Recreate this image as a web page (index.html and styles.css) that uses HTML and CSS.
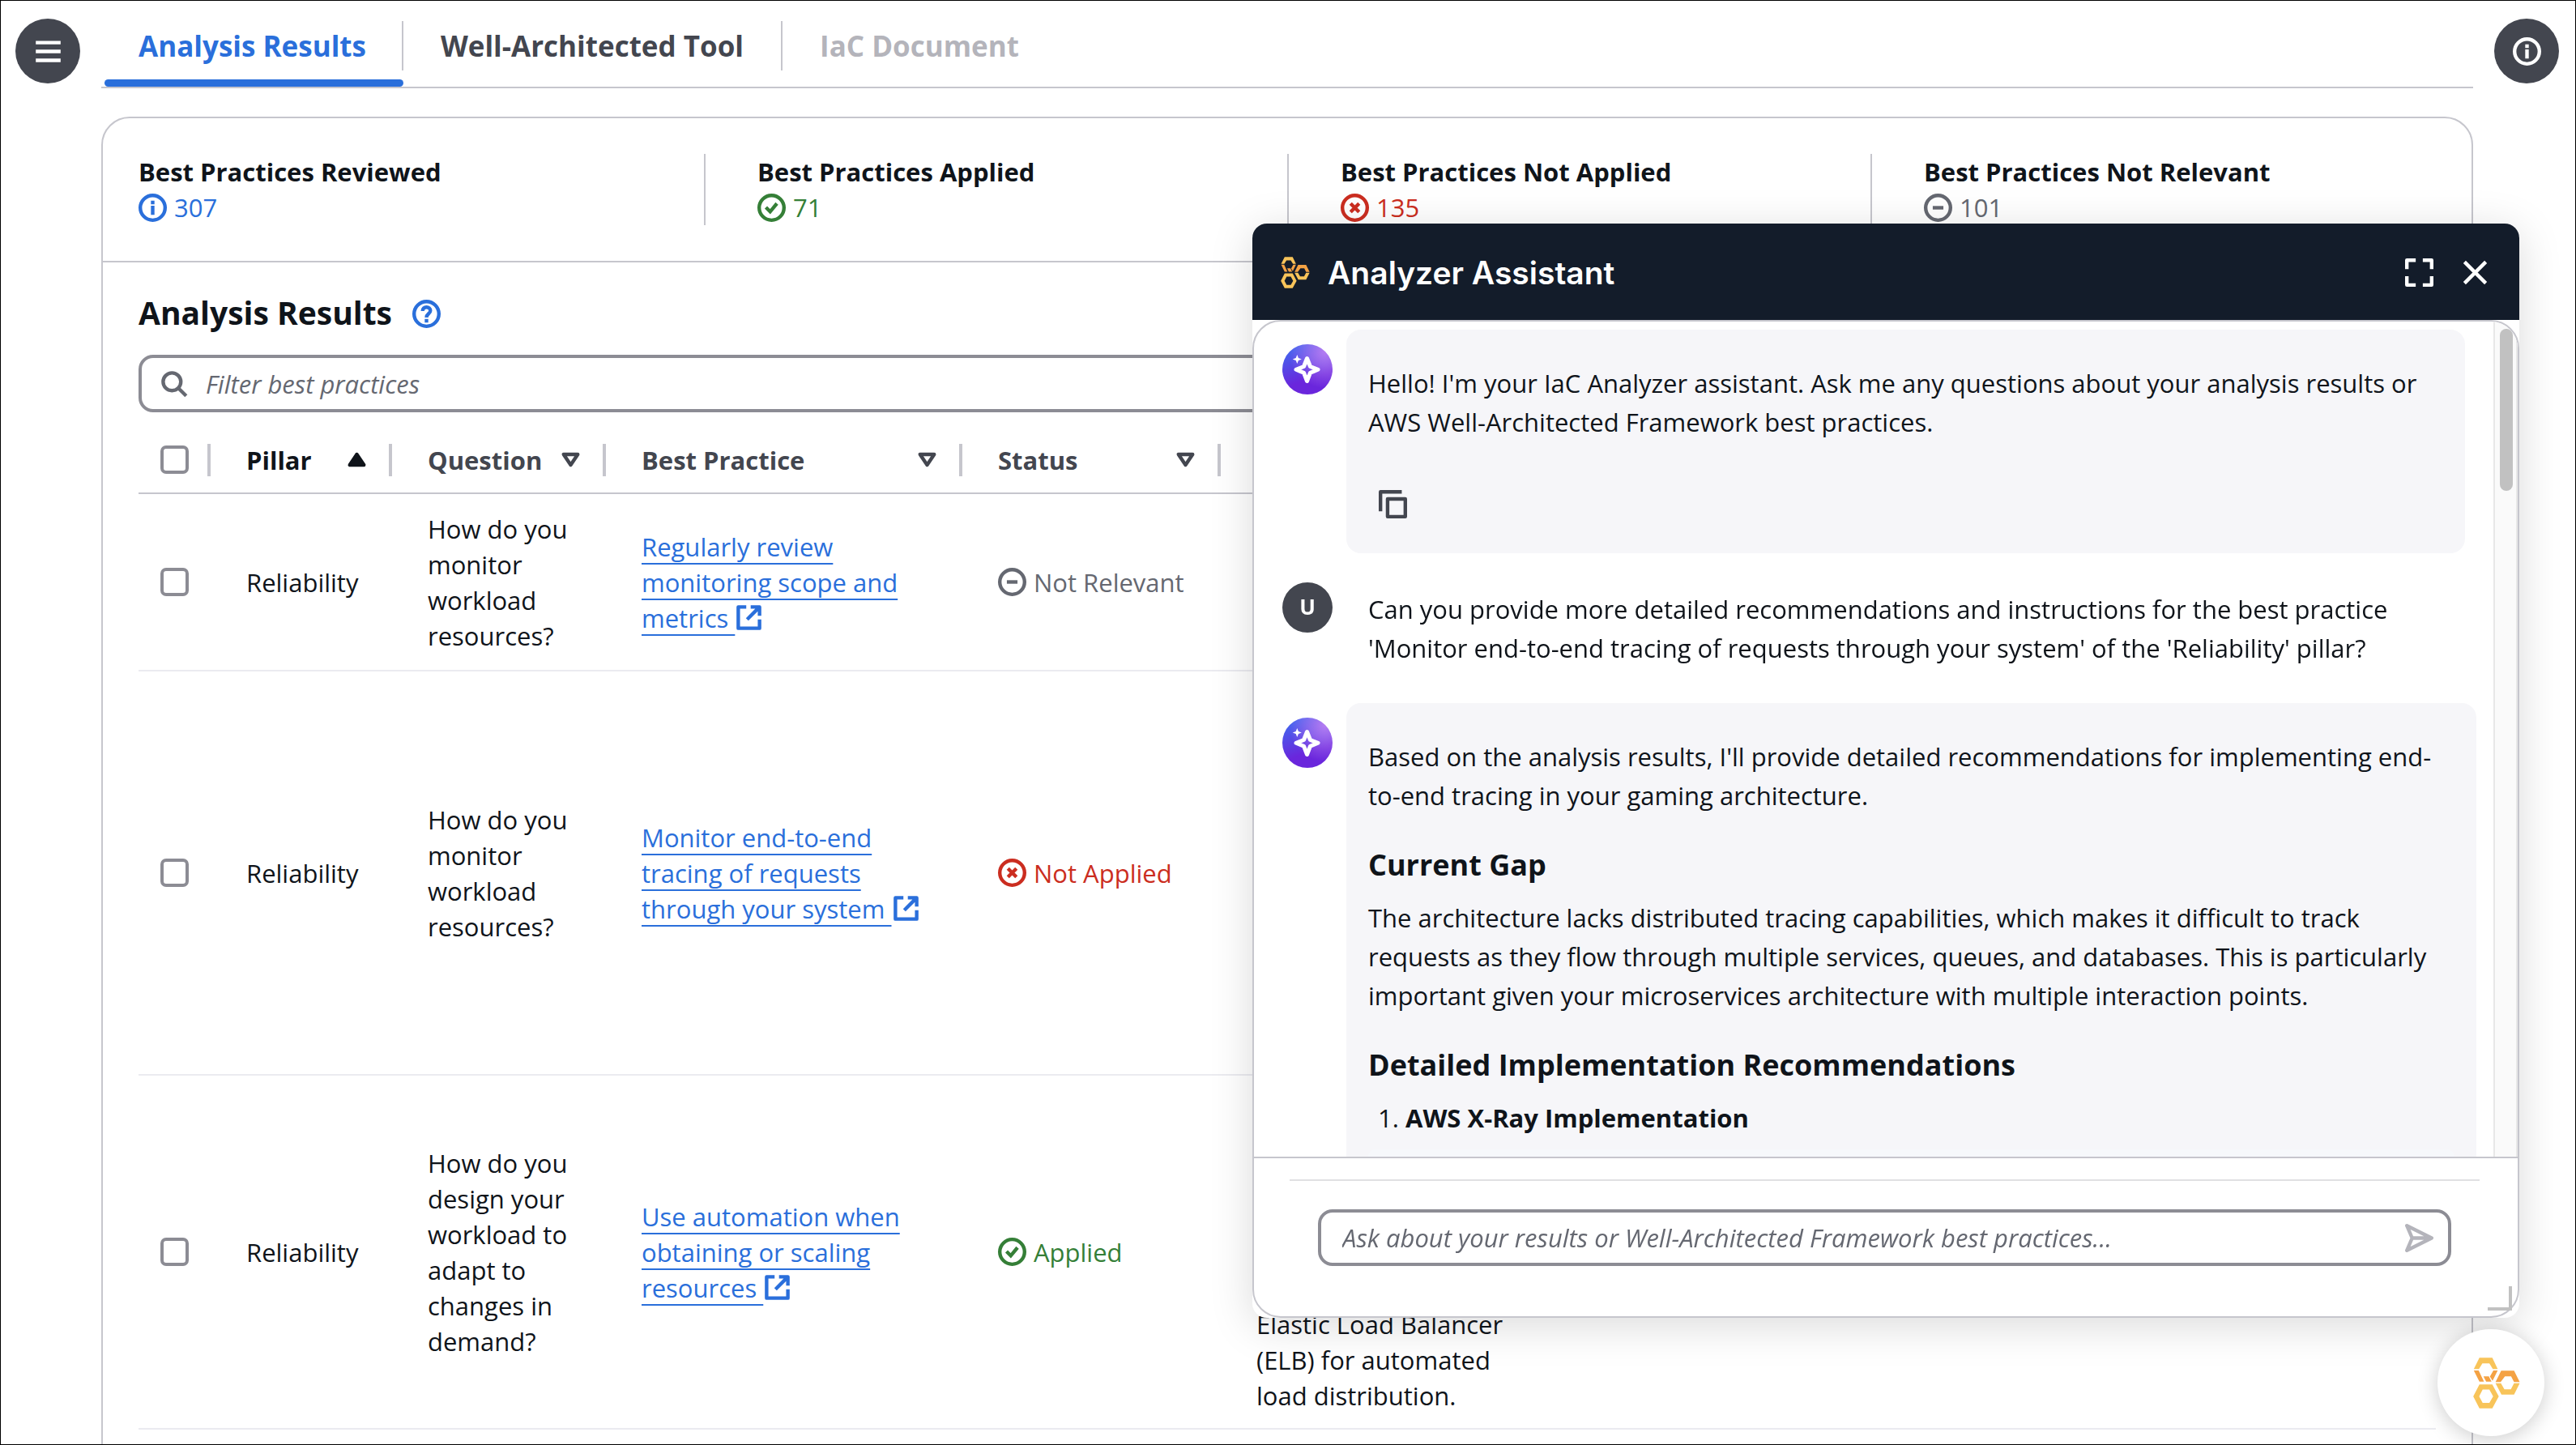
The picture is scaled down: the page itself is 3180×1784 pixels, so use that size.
FILE: index.html
```html
<!DOCTYPE html>
<html lang="en">
<head>
<meta charset="utf-8">
<meta name="viewport" content="width=device-width, initial-scale=1">
<title>Analysis Results</title>
<link rel="stylesheet" href="styles.css">
</head>
<body>
<svg class="sprite" aria-hidden="true">
  <symbol id="i-menu" viewBox="0 0 16 16"><path d="M1 3h14M1 8h14M1 13h14"/></symbol>
  <symbol id="i-info" viewBox="0 0 16 16"><circle cx="8" cy="8" r="7"/><path d="M8 4v2M8 6.8v5.2"/></symbol>
  <symbol id="i-check" viewBox="0 0 16 16"><circle cx="8" cy="8" r="7"/><path d="m4.8 7.8 2.4 2.4 3.8-4.6"/></symbol>
  <symbol id="i-error" viewBox="0 0 16 16"><circle cx="8" cy="8" r="7"/><path d="m5.6 5.6 4.8 4.8M10.4 5.6l-4.8 4.8"/></symbol>
  <symbol id="i-minus" viewBox="0 0 16 16"><circle cx="8" cy="8" r="7"/><path d="M5 8h6"/></symbol>
  <symbol id="i-help" viewBox="0 0 16 16"><circle cx="8" cy="8" r="7"/><path d="M5.8 6.4C5.8 5 6.8 4.2 8 4.2s2.2.8 2.2 2C10.200 7.900 8 7.900 8 10M8 10.900v2"/></symbol>
  <symbol id="i-search" viewBox="0 0 16 16"><circle cx="7" cy="7" r="5"/><path d="m10.500 10.500 4.500 4.500"/></symbol>
  <symbol id="i-asc" viewBox="0 0 16 16"><path fill="currentColor" stroke-linejoin="round" d="M4 11h8L8 5z"/></symbol>
  <symbol id="i-desc" viewBox="0 0 16 16"><path stroke-linejoin="round" d="M4 5h8l-4 6z"/></symbol>
  <symbol id="i-external" viewBox="0 0 16 16"><path d="M9 2h5v5M7 9l7-7M14 9v5H2V2h4.500" stroke-linejoin="round"/></symbol>
  <symbol id="i-copy" viewBox="0 0 16 16"><path stroke-linejoin="round" d="M1 12V1h12M5 5h10v10H5z"/></symbol>
  <symbol id="i-expand" viewBox="0 0 16 16"><path stroke-linejoin="round" d="M1 6V1h5M10 1h5v5M15 10v5h-5M6 15H1v-5"/></symbol>
  <symbol id="i-close" viewBox="0 0 16 16"><path d="m2 2 12 12M14 2 2 14"/></symbol>
  <symbol id="i-send" viewBox="0 0 16 16"><path stroke-linejoin="round" d="M1 1l14 7-14 7 3-7zM4 8h11"/></symbol>
  <symbol id="i-spark" viewBox="0 0 62 62"><path fill="none" stroke="#fff" stroke-width="5" stroke-linejoin="round" d="M30.500 17.500 34.500 27.500 44 31.300 34.500 35.200 30.500 45.500 26.500 35.200 17 31.300 26.500 27.500z"/><path fill="#fff" stroke="none" d="M18.300 13l1.600 3.900 4 1.600-4 1.600-1.600 3.900-1.600-3.900-4-1.600 4-1.600z"/></symbol>
  <symbol id="i-logo" viewBox="0 0 174 190">
    <g stroke="none">
      <path fill="#f8c45a" d="M2 43 23 1h48l20 42H73L60 22H34L21 43ZM83 96h20l13 22h24l12-22h21l-21 42h-47Z"/>
      <path fill="#f8c45a" fill-rule="evenodd" d="M23 100h48l24 45-24 44H23L0 145ZM35 119 22 145l13 24h25l14-24-14-26Z"/>
      <path fill="#f4a244" d="M2 48h18l20 42H23ZM38 70h20l10 20H48ZM91 48H75L62 71l10 16ZM83 91l21-42h48l21 42h-21l-11-21h-23l-16 21Z"/>
    </g>
  </symbol>
</svg>

<div class="app">
  <button class="round" type="button" aria-label="Open navigation"><svg class="icon"><use href="#i-menu"/></svg></button>

  <main class="main">
    <ul class="tabs" role="tablist">
      <li class="tab tab-active"><button type="button" role="tab" aria-selected="true">Analysis Results</button></li>
      <li class="tab"><button type="button" role="tab" aria-selected="false">Well-Architected Tool</button></li>
      <li class="tab"><button type="button" role="tab" aria-selected="false" disabled>IaC Document</button></li>
    </ul>

    <section class="card">
      <div class="stats">
        <div class="stat"><strong>Best Practices Reviewed</strong><span class="status blue"><svg class="icon"><use href="#i-info"/></svg>307</span></div>
        <div class="stat"><strong>Best Practices Applied</strong><span class="status green"><svg class="icon"><use href="#i-check"/></svg>71</span></div>
        <div class="stat"><strong>Best Practices Not Applied</strong><span class="status red"><svg class="icon"><use href="#i-error"/></svg>135</span></div>
        <div class="stat"><strong>Best Practices Not Relevant</strong><span class="status grey"><svg class="icon"><use href="#i-minus"/></svg>101</span></div>
      </div>

      <div class="results">
        <div class="heading">
          <h2>Analysis Results</h2>
          <button class="plain blue" type="button" aria-label="Help"><svg class="icon"><use href="#i-help"/></svg></button>
        </div>
        <label class="filter">
          <svg class="icon"><use href="#i-search"/></svg>
          <input type="search" placeholder="Filter best practices" aria-label="Filter best practices">
        </label>

        <table class="table">
          <colgroup><col class="c-check"><col class="c-pillar"><col class="c-question"><col class="c-practice"><col class="c-status"><col class="c-reason"><col></colgroup>
          <thead>
            <tr>
              <th class="check"><div class="th"><input type="checkbox" aria-label="Select all"></div></th>
              <th class="sorted"><div class="th">Pillar<svg class="icon"><use href="#i-asc"/></svg></div></th>
              <th><div class="th">Question<svg class="icon"><use href="#i-desc"/></svg></div></th>
              <th><div class="th">Best Practice<svg class="icon"><use href="#i-desc"/></svg></div></th>
              <th><div class="th">Status<svg class="icon"><use href="#i-desc"/></svg></div></th>
              <td></td>
              <td></td>
            </tr>
          </thead>
          <tbody>
            <tr class="row-short">
              <td class="check"><input type="checkbox" aria-label="Select row 1"></td>
              <td>Reliability</td>
              <td>How do you monitor workload resources?</td>
              <td><a href="#scope">Regularly review monitoring scope and metrics&nbsp;<svg class="icon"><use href="#i-external"/></svg></a></td>
              <td><span class="status grey"><svg class="icon"><use href="#i-minus"/></svg>Not Relevant</span></td>
              <td></td>
              <td></td>
            </tr>
            <tr class="row-tall">
              <td class="check"><input type="checkbox" aria-label="Select row 2"></td>
              <td>Reliability</td>
              <td>How do you monitor workload resources?</td>
              <td><a href="#tracing">Monitor end-to-end tracing of requests through your system&nbsp;<svg class="icon"><use href="#i-external"/></svg></a></td>
              <td><span class="status red"><svg class="icon"><use href="#i-error"/></svg>Not Applied</span></td>
              <td></td>
              <td></td>
            </tr>
            <tr class="row-mid">
              <td class="check"><input type="checkbox" aria-label="Select row 3"></td>
              <td>Reliability</td>
              <td>How do you design your workload to adapt to changes in demand?</td>
              <td><a href="#automation">Use automation when obtaining or scaling resources&nbsp;<svg class="icon"><use href="#i-external"/></svg></a></td>
              <td><span class="status green"><svg class="icon"><use href="#i-check"/></svg>Applied</span></td>
              <td class="reason">Elastic Load Balancer (ELB) for automated load distribution.</td>
              <td></td>
            </tr>
          </tbody>
        </table>
      </div>
    </section>
  </main>

  <button class="round" type="button" aria-label="Open information panel"><svg class="icon"><use href="#i-info"/></svg></button>
</div>

<aside class="chat" aria-label="Analyzer Assistant">
  <header class="chat-head">
    <svg class="chat-logo"><use href="#i-logo"/></svg>
    <h3>Analyzer Assistant</h3>
    <button class="plain" type="button" aria-label="Full screen"><svg class="icon"><use href="#i-expand"/></svg></button>
    <button class="plain" type="button" aria-label="Close"><svg class="icon"><use href="#i-close"/></svg></button>
  </header>
  <div class="chat-body">
    <div class="scroll">
      <div class="messages">
        <article class="message">
          <div class="avatar avatar-ai"><svg><use href="#i-spark"/></svg></div>
          <div class="bubble bubble-ai bubble-intro">
            <p>Hello! I'm your IaC Analyzer assistant. Ask me any questions about your analysis results or AWS Well-Architected Framework best practices.</p>
            <button class="plain copy" type="button" aria-label="Copy"><svg class="icon"><use href="#i-copy"/></svg></button>
          </div>
        </article>
        <article class="message">
          <div class="avatar">U</div>
          <div class="bubble">
            <p>Can you provide more detailed recommendations and instructions for the best practice 'Monitor end-to-end tracing of requests through your system' of the 'Reliability' pillar?</p>
          </div>
        </article>
        <article class="message">
          <div class="avatar avatar-ai"><svg><use href="#i-spark"/></svg></div>
          <div class="bubble bubble-ai">
            <p>Based on the analysis results, I'll provide detailed recommendations for implementing end-to-end tracing in your gaming architecture.</p>
            <h4>Current Gap</h4>
            <p>The architecture lacks distributed tracing capabilities, which makes it difficult to track requests as they flow through multiple services, queues, and databases. This is particularly important given your microservices architecture with multiple interaction points.</p>
            <h4>Detailed Implementation Recommendations</h4>
            <ol><li><strong>AWS X-Ray Implementation</strong></li></ol>
            <pre class="code"></pre>
          </div>
        </article>
      </div>
      <div class="track"><div class="thumb"></div></div>
    </div>
    <form class="prompt">
      <div class="prompt-box">
        <input type="text" placeholder="Ask about your results or Well-Architected Framework best practices..." aria-label="Ask the assistant">
        <button class="plain" type="button" aria-label="Send" disabled><svg class="icon"><use href="#i-send"/></svg></button>
      </div>
    </form>
  </div>
  <span class="grip"></span>
</aside>

<button class="fab" type="button" aria-label="Toggle assistant"><svg><use href="#i-logo"/></svg></button>
</body>
</html>
```
FILE: styles.css
```css
:root {
  --blue: #2a6fdb;
  --green: #357f37;
  --red: #cb2d20;
  --grey: #656871;
  --ink: #0f141a;
  --slate: #43464f;
  --line: #c6c6cd;
  --line-soft: #ebebf0;
  --control: #8c8c94;
}

* { box-sizing: border-box; }

body {
  margin: 0;
  font: 31px/44px "Open Sans", "Noto Sans", sans-serif;
  color: var(--ink);
  background: #fff;
}

h2, h3, h4, p, ul, ol, pre { margin: 0; padding: 0; }

button, input { font: inherit; color: inherit; margin: 0; padding: 0; border: 0; background: none; }

.sprite { position: absolute; width: 0; height: 0; }

.icon {
  width: 35px;
  height: 35px;
  flex: none;
  fill: none;
  stroke: currentColor;
  stroke-width: 2;
}

.plain { display: flex; }

.blue { color: var(--blue); }
.green { color: var(--green); }
.red { color: var(--red); }
.grey { color: var(--grey); }

/* Page frame */
.app {
  display: flex;
  gap: 26px;
  height: 100vh;
  overflow: hidden;
  padding: 0 20px 0 18px;
  border: 1px solid #000;
}

.round {
  display: grid;
  place-items: center;
  flex: none;
  width: 80px;
  height: 80px;
  margin-top: 22px;
  border-radius: 50%;
  color: #fff;
  background: var(--slate);
}

.main { flex: 1; min-width: 0; }

/* Tabs */
.tabs {
  display: flex;
  list-style: none;
  padding: 25px 0 0 4px;
  border-bottom: 2px solid var(--line);
}

.tab { display: grid; gap: 11px; }

.tab button {
  height: 61px;
  padding: 0 46px;
  border-right: 2px solid var(--line);
  font-size: 35px;
  font-weight: 700;
  color: var(--slate);
}

.tab:first-child button { padding: 0 44px 0 42px; }
.tab:last-child button { border-right: 0; }
.tab button:disabled { color: #b4b4bb; }
.tab-active button { color: var(--blue); }
.tab::after { content: ""; height: 9px; border-radius: 5px; }
.tab-active::after { background: var(--blue); }

/* Results card */
.card {
  margin-top: 35px;
  border: 2px solid var(--line);
  border-radius: 35px 35px 0 0;
  min-height: 100vh;
}

.stats {
  display: grid;
  grid-template-columns: repeat(4, 1fr);
  padding: 44px 22px;
  border-bottom: 2px solid var(--line);
}

.stat { padding-left: 64px; border-left: 2px solid var(--line); }
.stat:first-child { padding-left: 22px; border-left: 0; }
.stat strong { display: block; }

.status { display: flex; align-items: center; gap: 9px; }

.results { padding: 38px 44px 0; }

.heading { display: flex; align-items: center; gap: 25px; height: 48px; }
.heading h2 { font-size: 39px; font-weight: 700; }
.heading .plain { padding-top: 3px; }

.filter {
  display: flex;
  align-items: center;
  gap: 22px;
  height: 71px;
  margin-top: 28px;
  padding: 0 22px;
  border: 4px solid var(--control);
  border-radius: 18px;
  color: var(--grey);
}

.filter input { flex: 1; outline: 0; }
input::placeholder { color: var(--grey); font-style: italic; opacity: 1; }

/* Table */
.table { width: 100%; margin-top: 18px; table-layout: fixed; border-collapse: separate; border-spacing: 0; }
.c-check { width: 89px; }
.c-pillar { width: 224px; }
.c-question { width: 264px; }
.c-practice { width: 440px; }
.c-status { width: 319px; }
.c-reason { width: 400px; }

.table th {
  height: 83px;
  padding: 0;
  text-align: left;
  font-weight: 700;
  color: var(--slate);
}
.table th.sorted { color: var(--ink); }
.table thead th, .table thead td { border-bottom: 2px solid var(--line); }

.th {
  display: flex;
  align-items: center;
  justify-content: space-between;
  height: 40px;
  padding: 0 22px 0 44px;
  border-right: 4px solid var(--line);
}
.check .th { padding: 0 22px 0 27px; }

.table td { padding: 0 40px 0 44px; border-bottom: 2px solid var(--line-soft); }
.table td.check { padding: 0 0 0 27px; }
.table td.reason { padding: 0 44px 18px; vertical-align: bottom; }
.row-short { height: 219px; }
.row-tall { height: 499px; }
.row-mid { height: 437px; }

input[type="checkbox"] {
  appearance: none;
  display: block;
  width: 35px;
  height: 35px;
  border: 4px solid var(--control);
  border-radius: 7px;
  background: #fff;
}

.table a {
  color: var(--blue);
  text-decoration: underline 2px;
  text-underline-offset: 8px;
  text-decoration-skip-ink: none;
}
.table a .icon { vertical-align: -5px; }

/* Assistant window */
.chat {
  position: fixed;
  right: 70px;
  bottom: 157px;
  display: flex;
  flex-direction: column;
  width: 1564px;
  height: 1351px;
  max-width: calc(100vw - 140px);
  max-height: calc(100vh - 180px);
  border-radius: 18px;
  background: #fff;
  box-shadow: 0 9px 53px rgba(0, 0, 0, .15);
}

.chat-head {
  display: flex;
  align-items: center;
  gap: 34px;
  height: 119px;
  padding: 2px 37px 0 35px;
  border-radius: 18px 18px 0 0;
  color: #fff;
  background: #131c2a;
}

.chat-logo { width: 36px; height: 39px; }
.chat-head h3 { flex: 1; margin-left: -12px; font: 600 39px/50px Inter, sans-serif; }

.chat-body {
  flex: 1;
  min-height: 0;
  display: flex;
  flex-direction: column;
  border: 2px solid var(--line);
  border-radius: 35px;
  overflow: hidden;
}

.scroll { flex: 1; min-height: 0; display: flex; }

.messages {
  flex: 1;
  display: flex;
  flex-direction: column;
  gap: 18px;
  padding: 10px 21px 0 35px;
  overflow: hidden;
  line-height: 48px;
}

.message { display: flex; gap: 17px; flex: none; }

.avatar {
  flex: none;
  width: 62px;
  height: 62px;
  margin-top: 18px;
  border-radius: 50%;
  color: #fff;
  background: var(--slate);
  font-size: 26px;
  font-weight: 700;
  line-height: 60px;
  text-align: center;
}
.avatar svg { display: block; width: 62px; height: 62px; }
.avatar-ai {
  background:
    radial-gradient(circle at 85% 15%, #b57df2, rgba(181, 125, 242, 0) 60%),
    linear-gradient(160deg, #3f6cf0 5%, #6a26dc 65%);
}

.bubble { flex: 1; padding: 27px 27px 26px; }
.bubble-ai { padding: 42px 27px 43px; border-radius: 18px; background: #f6f6f9; }
.bubble-intro { margin-right: 14px; }
.copy { margin: 60px 0 0 13px; color: var(--slate); }

.bubble h4 { margin: 38px 0 17px; font-size: 36px; font-weight: 700; line-height: 48px; }
.bubble ol { padding-left: 46px; }
.code { height: 300px; margin-top: 15px; border-radius: 9px; background: #f6f8fb; }

.track {
  width: 30px;
  padding: 9px 4px 0 6px;
  border: solid #e8e8e8;
  border-width: 0 2px;
  background: #fafafa;
}
.thumb { height: 200px; border-radius: 8px; background: #c1c1c1; }

.prompt {
  flex: none;
  height: 197px;
  padding: 0 47px 0 44px;
  border-top: 2px solid var(--line);
}
.prompt::before { content: ""; display: block; height: 2px; margin-top: 26px; background: #e0e0e2; }

.prompt-box {
  display: flex;
  align-items: center;
  height: 70px;
  margin: 35px 35px 0;
  padding: 0 18px 0 26px;
  border: 4px solid var(--control);
  border-radius: 18px;
}
.prompt-box input { flex: 1; outline: 0; }
.prompt-box button { color: #b4b4bb; }

.grip {
  position: absolute;
  right: 9px;
  bottom: 9px;
  width: 30px;
  height: 30px;
  border: solid #c1c1c1;
  border-width: 0 4px 4px 0;
}

.fab {
  position: fixed;
  right: 39px;
  bottom: 11px;
  display: grid;
  place-items: center;
  width: 132px;
  height: 132px;
  padding-left: 14px;
  border-radius: 50%;
  background: #fff;
  box-shadow: 0 4px 26px rgba(0, 0, 0, .2);
}
.fab svg { width: 58px; height: 63px; }
```
